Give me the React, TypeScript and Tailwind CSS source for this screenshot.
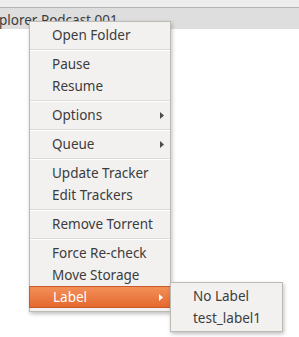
import React from "react";

type Entry = { label: string; sub?: boolean; active?: boolean } | "sep";

const items: Entry[] = [
  { label: "Open Folder" },
  "sep",
  { label: "Pause" },
  { label: "Resume" },
  "sep",
  { label: "Options", sub: true },
  "sep",
  { label: "Queue", sub: true },
  "sep",
  { label: "Update Tracker" },
  { label: "Edit Trackers" },
  "sep",
  { label: "Remove Torrent" },
  "sep",
  { label: "Force Re-check" },
  { label: "Move Storage" },
  { label: "Label", sub: true, active: true },
];

function Arrow({ light }: { light?: boolean }) {
  return (
    <svg width="4" height="7" viewBox="0 0 4 7" className="shrink-0">
      <path d="M0 0 L4 3.5 L0 7 Z" fill={light ? "#ffffff" : "#4c4c4c"} />
    </svg>
  );
}

export default function App() {
  return (
    <div
      className="relative h-[337px] w-[299px] overflow-hidden bg-white text-[#3c3c3c]"
      style={{ fontFamily: '"Noto Sans", "Open Sans", sans-serif' }}
    >
      <div className="h-[7px] bg-[#ededed]" />
      <div className="h-px bg-[#b4b4b4]" />
      <div className="flex h-[21px] items-end bg-[#dedede] pb-[2px] text-[13.5px] leading-none">
        <span className="-ml-px">plorer Podcast 001</span>
      </div>

      {/* main context menu */}
      <div className="absolute left-[29px] top-[21px] w-[142px] border border-[#bdbab4] bg-[#f2f1f0] pb-[3px] pt-[2px] shadow-[1px_2px_4px_rgba(0,0,0,0.25)]">
        {items.map((it, i) =>
          it === "sep" ? (
            <div key={i} className="flex h-[7px] flex-col justify-center">
              <div className="h-px bg-[#dcdad5]" />
              <div className="h-px bg-white" />
            </div>
          ) : (
            <div
              key={i}
              className={
                it.active
                  ? "-mx-px flex h-[22px] items-center justify-between border border-[#c8592a] bg-gradient-to-b from-[#f38f58] to-[#e4692f] pl-[23px] pr-[7px] text-[13.5px] text-white"
                  : "flex h-[22px] items-center justify-between pl-[22px] pr-[6px] text-[13.5px]"
              }
            >
              <span>{it.label}</span>
              {it.sub && <Arrow light={it.active} />}
            </div>
          )
        )}
      </div>

      {/* Label submenu */}
      <div className="absolute left-[170px] top-[282px] w-[113px] border border-[#bdbab4] bg-[#f2f1f0] pb-[2px] pt-[2px] shadow-[1px_2px_4px_rgba(0,0,0,0.25)]">
        <div className="flex h-[22px] items-center pl-[22px] text-[13.5px]">No Label</div>
        <div className="flex h-[22px] items-center pl-[22px] text-[13.5px]">test_label1</div>
      </div>
    </div>
  );
}
